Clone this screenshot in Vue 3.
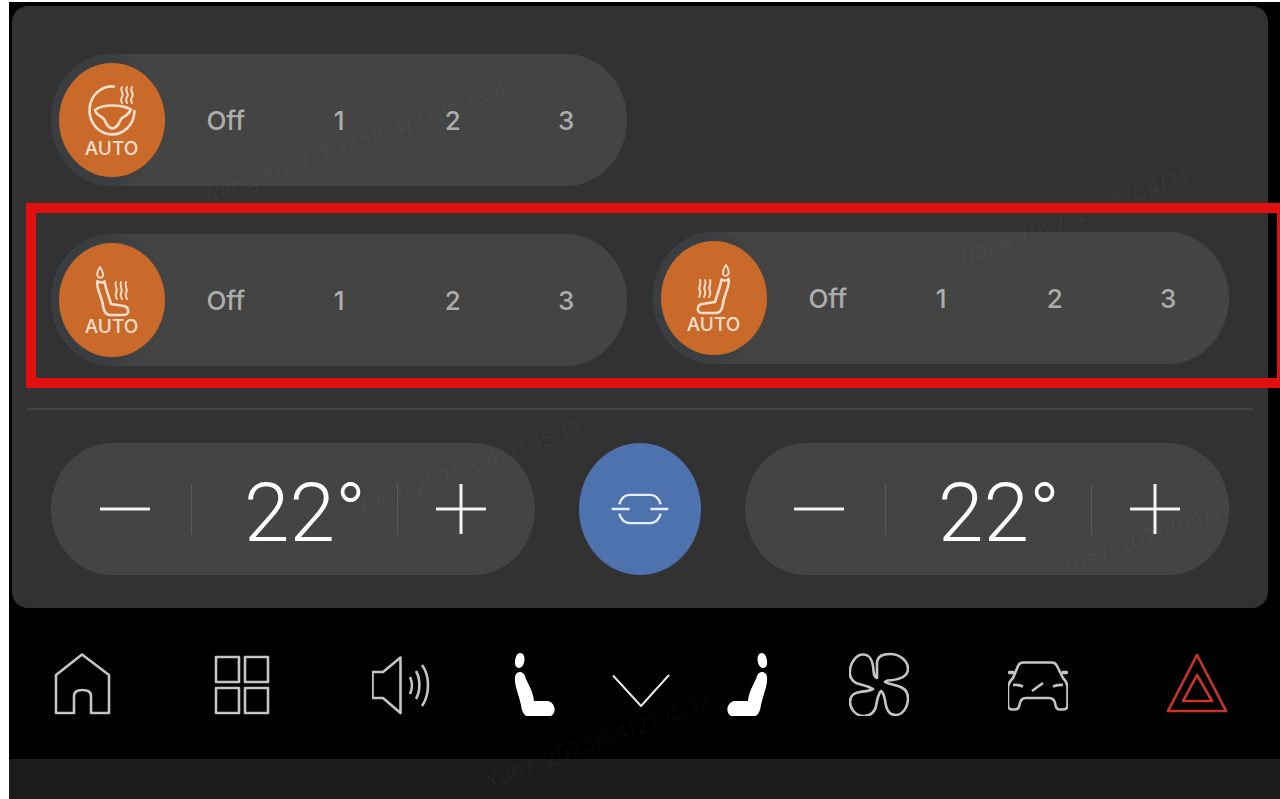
<script setup>
const levels = ['Off', '1', '2', '3']
const marks = [
  { text: 'Wang.Yue7-2025/04/21 15:13:48', x: 205, y: 185 },
  { text: 'Wang.Yue7-2025/04/21', x: 960, y: 245 },
  { text: 'Yue7-2025/04/21 15:13', x: 360, y: 495 },
  { text: 'Yue7-2025/04/21', x: 1065, y: 555 },
  { text: 'Yue7-2025/04/21 15:13', x: 490, y: 768 }
]
</script>

<template>
  <div class="page">
    <div class="screen">
      <section class="panel">
        <div class="row">
          <div class="pill">
            <div class="ring">
              <div class="knob">
                <svg class="knob-icon" viewBox="86 84 52 54">
                  <path d="M114 87.500A22.500 24 0 1 0 134.500 112" />
                  <path d="M95 111C100 107 106 106.500 112 106.500C119 106.500 125 107 131 110.500C129 116 124 117 121 120C119 124 118 128.500 112.500 129.500C107 128.500 106 124 104 120C101 117 96 116 95 111Z" />
                  <path class="thin" d="M122 88C119 92 125 95 122 98C120.500 100 121 102 122 104M127 88C124 92 130 95 127 98C125.500 100 126 102 127 104M132 88C129 92 135 95 132 98C130.500 100 131 102 132 104" />
                </svg>
                <span>AUTO</span>
              </div>
            </div>
            <ul class="levels">
              <li v-for="l in levels" :key="l">{{ l }}</li>
            </ul>
          </div>
        </div>

        <div class="row seats">
          <div class="pill pill-low">
            <div class="ring">
              <div class="knob knob-seat">
                <svg class="knob-icon" viewBox="86 262 52 54">
                  <path class="thin" d="M100 266C97.500 270 96.500 272 97.500 275C99 277.500 102 277.500 103 275C103.500 272 102 269 100 266Z" />
                  <path d="M97.500 280C99 282 103 282 104.500 280.500C106 289 109 296 111 303L124 305C129.500 306 129.500 314 124 314L110 314C104.500 314 103.500 308 102.500 302C101 294 95.500 285 97.500 280Z" />
                  <path class="thin" d="M116 281C113.500 285 119 288 116 292C115 294 116 296 117 298M121 281C118.500 285 124 288 121 292C120 294 121 296 122 298M126 281C123.500 285 129 288 126 292C125 294 126 296 127 298" />
                </svg>
                <span>AUTO</span>
              </div>
            </div>
            <ul class="levels">
              <li v-for="l in levels" :key="l">{{ l }}</li>
            </ul>
          </div>
          <div class="pill">
            <div class="ring">
              <div class="knob knob-seat">
                <svg class="knob-icon flip" viewBox="86 262 52 54">
                  <path class="thin" d="M100 266C97.500 270 96.500 272 97.500 275C99 277.500 102 277.500 103 275C103.500 272 102 269 100 266Z" />
                  <path d="M97.500 280C99 282 103 282 104.500 280.500C106 289 109 296 111 303L124 305C129.500 306 129.500 314 124 314L110 314C104.500 314 103.500 308 102.500 302C101 294 95.500 285 97.500 280Z" />
                  <path class="thin" d="M116 281C113.500 285 119 288 116 292C115 294 116 296 117 298M121 281C118.500 285 124 288 121 292C120 294 121 296 122 298M126 281C123.500 285 129 288 126 292C125 294 126 296 127 298" />
                </svg>
                <span>AUTO</span>
              </div>
            </div>
            <ul class="levels">
              <li v-for="l in levels" :key="l">{{ l }}</li>
            </ul>
          </div>
        </div>

        <hr class="rule" />

        <div class="row temps">
          <div v-for="side in ['left', 'right']" :key="side" class="temp">
            <button class="step step-minus">
              <svg viewBox="0 0 50 50"><path d="M0 25H50" /></svg>
            </button>
            <i class="sep"></i>
            <div class="value">22°</div>
            <i class="sep"></i>
            <button class="step step-plus">
              <svg viewBox="0 0 50 50"><path d="M0 25H50M25 0V50" /></svg>
            </button>
          </div>
          <div class="sync">
            <svg viewBox="0 0 62 36">
              <path d="M1 18H20M42 18H61" />
              <path d="M9 13C11 7 14 3 20 3H42C48 3 51 7 53 13M9 23C11 29 14 33 20 33H42C48 33 51 29 53 23" />
            </svg>
          </div>
        </div>
      </section>

      <nav class="nav">
        <div class="nav-group left">
          <svg viewBox="52 652 60 64">
            <path d="M56 713V675L82 654.500L109 675V713H91V696C91 692 88 690 82.500 690C77 690 74 692 74 696V713Z" />
          </svg>
          <svg viewBox="212 652 60 64">
            <path d="M216 657H239V682H216ZM245 657H268V682H245ZM216 688H239V713H216ZM245 688H268V713H245Z" />
          </svg>
          <svg viewBox="372 652 60 64">
            <path d="M372.500 672V698H383L400.500 713V657.500L383 672Z" />
            <path d="M410 677C412.500 682 412.500 689 410 694M416 671C420.500 679 420.500 691 416 699M422 665C430 676 430 694 422 706" />
          </svg>
        </div>
        <div class="nav-group middle">
          <svg class="solid" viewBox="503 652 60 64">
            <path d="M519 653C522 653 523.500 656 523.500 659C523.500 664 521 668 518 668C515 668 513.500 665 514 661C514.500 657 516 653 519 653Z" />
            <path d="M514 677C514.500 671 522 670 524 676C526 683 532 690 533 701L547 701C556 703 556 717 546 717L530 717C523 717 521 712 520 705C518 695 513 685 514 677Z" />
          </svg>
          <svg class="chevron" viewBox="610 652 60 64">
            <path d="M612 675.500L640 706L668 675" />
          </svg>
          <svg class="solid flip" viewBox="503 652 60 64">
            <path d="M519 653C522 653 523.500 656 523.500 659C523.500 664 521 668 518 668C515 668 513.500 665 514 661C514.500 657 516 653 519 653Z" />
            <path d="M514 677C514.500 671 522 670 524 676C526 683 532 690 533 701L547 701C556 703 556 717 546 717L530 717C523 717 521 712 520 705C518 695 513 685 514 677Z" />
          </svg>
        </div>
        <div class="nav-group right">
          <svg viewBox="849 652 60 64">
            <path d="M877 678C877 672 877 668 877 662C878 655 884 654 890 654C900 654 908 661 908 669C908 677 900 679 893 680C889 680 886 681 885 682C888 684 893 684 898 686C905 688 908 693 908 698C908 708 902 715 896 715C888 715 886 708 885 700C884 695 883 692 881 691C878 694 877 700 876 706C875 712 870 716 864 716C855 716 850 708 850 702C850 695 854 693 860 692C866 691 871 691 873 689C869 686 862 685 856 683C852 681 849 676 850 671C850 662 857 655 862 654.500C870 654 872 660 873 666C874 672 873 676 877 678Z" />
          </svg>
          <svg viewBox="1008 652 60 64">
            <path d="M1023 662.500H1052C1054 662.500 1056 664 1057 666L1063 678C1066 681 1067.500 684 1067.500 688V705C1067.500 708 1066 709.500 1063 709.500H1060C1057 709.500 1056 708 1055.500 705C1055 701 1053 698 1049 698H1026C1022 698 1020 701 1019.500 705C1019 708 1018 709.500 1015 709.500H1012C1009 709.500 1008 708 1008 705V688C1008 684 1010 681 1013 678L1018 666C1019 664 1021 662.500 1023 662.500Z" />
            <path d="M1013 685C1017 684.500 1020 685 1023 686.500M1063 685C1059 684.500 1056 685 1053 686.500M1032 691L1043 683" />
            <path class="blob" d="M1009.500 672.500H1013M1063 672.500H1066.500" />
          </svg>
          <svg class="hazard" viewBox="1167 652 60 64">
            <path d="M1197 655L1226 711H1168ZM1197 675L1212 701H1183Z" />
          </svg>
        </div>
      </nav>
      <div class="strip"></div>
    </div>

    <span v-for="(m, i) in marks" :key="i" class="mark" :style="{ left: m.x + 'px', top: m.y + 'px' }">{{ m.text }}</span>
    <!-- annotation drawn on top of the screenshot -->
    <div class="callout"></div>
  </div>
</template>

<style scoped>
.page {
  position: relative;
  width: 1280px;
  height: 799px;
  box-sizing: border-box;
  padding: 2px 0 0 9px;
  background: #fff;
  overflow: hidden;
  font-family: Inter, "Liberation Sans", sans-serif;
}

.screen {
  height: 100%;
  background: #000;
  display: flex;
  flex-direction: column;
}

.panel {
  box-sizing: border-box;
  height: 602px;
  margin: 4px 12px 0 3px;
  padding: 48px 39px 33px 39px;
  background: #323232;
  border-radius: 16px;
}

.row {
  display: flex;
  align-items: flex-start;
}

.seats {
  justify-content: space-between;
  margin-top: 46px;
}

.pill {
  display: flex;
  align-items: center;
  width: 576px;
  height: 132px;
  background: #444;
  border-radius: 61px / 66px;
}

.pill-low {
  margin-top: 2px;
}

.ring {
  display: flex;
  align-items: center;
  justify-content: center;
  flex: none;
  width: 122px;
  height: 132px;
  background: linear-gradient(90deg, #3b3e40 45%, #444 85%);
  border-radius: 50%;
}

.knob {
  display: flex;
  flex-direction: column;
  align-items: center;
  justify-content: flex-end;
  box-sizing: border-box;
  width: 106px;
  height: 114px;
  margin-left: -1px;
  padding-bottom: 18px;
  background: #c96a2a;
  border-radius: 50%;
  color: #f8dfcc;
  font-size: 19px;
  font-weight: 500;
  line-height: 20px;
}

.knob-icon {
  width: 52px;
  height: 54px;
  margin-bottom: 2px;
  fill: none;
  stroke: #f8dfcc;
  stroke-width: 2.600;
  stroke-linejoin: round;
  stroke-linecap: round;
}

.knob-icon .thin {
  stroke-width: 1.900;
}

.knob-seat {
  padding-bottom: 20px;
}

.knob-seat .knob-icon {
  margin-bottom: 0;
}

.flip {
  transform: scaleX(-1);
}

.levels {
  display: grid;
  grid-template-columns: repeat(4, 113.500px);
  margin: 0 0 0 -4px;
  padding: 0;
  list-style: none;
  color: #adadad;
  font-size: 26px;
  font-weight: 500;
  text-align: center;
}

.rule {
  height: 2px;
  margin: 42px -24px 33px -24px;
  border: 0;
  background: #444;
}

.temps {
  justify-content: space-between;
}

.temp {
  display: flex;
  align-items: center;
  width: 484px;
  height: 132px;
  background: #444;
  border-radius: 61px / 66px;
  color: #fff;
}

.temp:nth-child(2) {
  order: 3;
}

.sync {
  order: 2;
  display: flex;
  align-items: center;
  justify-content: center;
  width: 122px;
  height: 132px;
  background: #4d72ae;
  border-radius: 50%;
}

.sync svg {
  width: 60px;
  height: 34px;
  fill: none;
  stroke: #e4ecf7;
  stroke-width: 2.500;
}

.step {
  display: flex;
  align-items: center;
  justify-content: center;
  padding: 0;
  border: 0;
  background: none;
}

.step svg {
  width: 50px;
  height: 50px;
  fill: none;
  stroke: #f2f2f2;
  stroke-width: 3;
}

.step-minus {
  width: 140px;
  padding-left: 8px;
}

.step-plus {
  flex: 1;
  padding-right: 12px;
}

.sep {
  width: 1px;
  height: 50px;
  background: #5a5a5a;
}

.value {
  box-sizing: border-box;
  width: 205px;
  padding: 8px 0 0 52px;
  font-family: Roboto, "Liberation Sans", sans-serif;
  font-size: 82px;
  font-weight: 300;
  line-height: 1;
  white-space: nowrap;
}

.nav {
  display: flex;
  justify-content: space-between;
  box-sizing: border-box;
  height: 151px;
  padding: 44px 53px 0 43px;
}

.nav-group {
  display: flex;
  align-items: flex-start;
}

.nav-group svg {
  width: 60px;
  height: 64px;
  fill: none;
  stroke: #c4c4c4;
  stroke-width: 2.600;
  stroke-linejoin: round;
}

.nav-group .blob {
  stroke-width: 3.500;
  stroke-linecap: round;
}

.nav-group.left {
  gap: 100px;
}

.nav-group.middle {
  gap: 47px;
}

.nav-group.right {
  gap: 99px;
}

.nav-group .solid {
  fill: #fff;
  stroke: none;
}

.nav-group .chevron {
  stroke: #e8e8e8;
  stroke-width: 2;
}

.nav-group .hazard {
  stroke: #c9352b;
}

.strip {
  flex: 1;
  background: #1c1c1c;
}

.callout {
  position: absolute;
  left: 26px;
  top: 203px;
  box-sizing: border-box;
  width: 1261px;
  height: 185px;
  border: 10px solid #e20f0f;
}

.mark {
  position: absolute;
  color: rgba(255, 255, 255, 0.035);
  font-size: 22px;
  white-space: nowrap;
  transform: rotate(-20deg);
  transform-origin: left bottom;
}
</style>

<style>
html, body {
  background: #fff;
}
</style>
